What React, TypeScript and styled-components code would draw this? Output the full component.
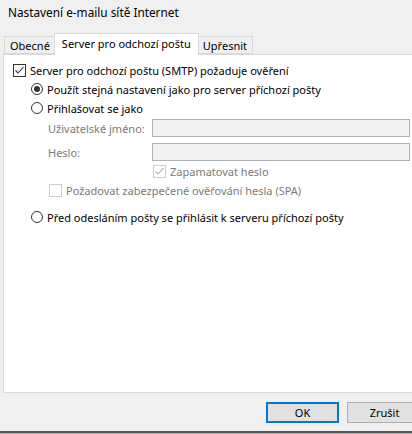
import React from "react";
import styled, { createGlobalStyle } from "styled-components";

const GlobalStyle = createGlobalStyle`
  html, body {
    margin: 0;
    padding: 0;
    background: #f0f0f0;
    overflow: hidden;
  }
  body {
    font-family: "Noto Sans", "Open Sans", sans-serif;
    font-size: 11px;
    color: #000;
  }
`;

const Dialog = styled.div`
  width: 412px;
  height: 434px;
  overflow: hidden;
  display: flex;
  flex-direction: column;
  background: #f0f0f0;
`;

const TitleBar = styled.div`
  height: 24px;
  padding-left: 8px;
  display: flex;
  align-items: center;
  font-size: 11.8px;
`;

const TabStrip = styled.div`
  display: flex;
  align-items: flex-end;
  height: 30px;
  padding-left: 4px;
  position: relative;
  z-index: 1;
`;

const Tab = styled.div<{ $active?: boolean }>`
  box-sizing: border-box;
  height: ${({ $active }) => ($active ? "22px" : "18px")};
  margin: ${({ $active }) => ($active ? "0 -2px -1px" : "0")};
  padding: ${({ $active }) => ($active ? "0 7px 2px" : "0 5px")};
  display: flex;
  align-items: center;
  border: 1px solid #d9d9d9;
  border-bottom: ${({ $active }) => ($active ? "none" : "1px solid #d9d9d9")};
  background: ${({ $active }) => ($active ? "#ffffff" : "#f0f0f0")};
  position: relative;
  z-index: ${({ $active }) => ($active ? 2 : 1)};
  white-space: nowrap;
`;

const Panel = styled.div`
  margin-left: 3px;
  width: 430px;
  flex-shrink: 0;
  height: 339px;
  box-sizing: border-box;
  background: #ffffff;
  border: 1px solid #d9d9d9;
  padding: 6px 0 0 9px;
  display: flex;
  flex-direction: column;
`;

const Row = styled.div<{ $indent?: number; $top?: number; $disabled?: boolean }>`
  height: 18px;
  display: flex;
  align-items: center;
  gap: 4px;
  margin-left: ${({ $indent }) => $indent ?? 0}px;
  margin-top: ${({ $top }) => $top ?? 0}px;
  color: ${({ $disabled }) => ($disabled ? "#7a7a7a" : "#000")};
  white-space: nowrap;
`;

const FieldLabel = styled.span`
  width: 100px;
  color: #7a7a7a;
`;

const Field = styled.div`
  width: 258px;
  height: 18px;
  flex-shrink: 0;
  box-sizing: border-box;
  background: #f0f0f0;
  border: 1px solid #abb2b9;
`;

const Box = styled.span<{ $disabled?: boolean }>`
  width: 13px;
  height: 13px;
  box-sizing: border-box;
  border: 1px solid ${({ $disabled }) => ($disabled ? "#cccccc" : "#333333")};
  background: #ffffff;
  display: flex;
  align-items: center;
  justify-content: center;
  flex-shrink: 0;
`;

const Ring = styled.span`
  width: 12px;
  height: 12px;
  box-sizing: border-box;
  border: 1px solid #333333;
  border-radius: 50%;
  background: #ffffff;
  display: flex;
  align-items: center;
  justify-content: center;
  flex-shrink: 0;
`;

const Dot = styled.span`
  width: 6px;
  height: 6px;
  border-radius: 50%;
  background: #333333;
`;

const Footer = styled.div`
  flex: 1;
  display: flex;
  flex-direction: column;
`;

const ButtonBar = styled.div`
  display: flex;
  gap: 8px;
  padding: 9px 0 0 266px;
  height: 29px;
`;

const Button = styled.div<{ $primary?: boolean }>`
  width: ${({ $primary }) => ($primary ? "73px" : "75px")};
  height: 21px;
  flex-shrink: 0;
  box-sizing: border-box;
  display: flex;
  align-items: center;
  justify-content: center;
  background: #e1e1e1;
  border: 1px solid ${({ $primary }) => ($primary ? "#0078d7" : "#adadad")};
  box-shadow: ${({ $primary }) => ($primary ? "inset 0 0 0 1px #0078d7" : "none")};
`;

const Edge = styled.div`
  flex: 1;
  border-top: 2px solid #555555;
  background: #b9b9b9;
`;

const Checkbox = ({ checked, disabled }: { checked?: boolean; disabled?: boolean }) => (
  <Box $disabled={disabled}>
    {checked && (
      <svg width="11" height="11" viewBox="0 0 11 11">
        <path
          d="M1.5 5.5 L4 8 L9.5 2"
          fill="none"
          stroke={disabled ? "#b0b0b0" : "#333333"}
          strokeWidth="1.1"
        />
      </svg>
    )}
  </Box>
);

const Radio = ({ checked }: { checked?: boolean }) => <Ring>{checked && <Dot />}</Ring>;

export default function App() {
  return (
    <>
      <GlobalStyle />
      <Dialog>
        <TitleBar>Nastavení e-mailu sítě Internet</TitleBar>
        <TabStrip>
          <Tab>Obecné</Tab>
          <Tab $active>Server pro odchozí poštu</Tab>
          <Tab>Upřesnit</Tab>
        </TabStrip>
        <Panel>
          <Row>
            <Checkbox checked />
            Server pro odchozí poštu (SMTP) požaduje ověření
          </Row>
          <Row $indent={18} $top={1}>
            <Radio checked />
            Použít stejná nastavení jako pro server příchozí pošty
          </Row>
          <Row $indent={18} $top={1}>
            <Radio />
            Přihlašovat se jako
          </Row>
          <Row $indent={35} $top={2}>
            <FieldLabel>Uživatelské jméno:</FieldLabel>
            <Field />
          </Row>
          <Row $indent={35} $top={6}>
            <FieldLabel>Heslo:</FieldLabel>
            <Field />
          </Row>
          <Row $indent={140} $top={1} $disabled>
            <Checkbox checked disabled />
            Zapamatovat heslo
          </Row>
          <Row $indent={36} $top={1} $disabled>
            <Checkbox disabled />
            Požadovat zabezpečené ověřování hesla (SPA)
          </Row>
          <Row $indent={18} $top={9}>
            <Radio />
            Před odesláním pošty se přihlásit k serveru příchozí pošty
          </Row>
        </Panel>
        <Footer>
          <ButtonBar>
            <Button $primary>OK</Button>
            <Button>Zrušit</Button>
          </ButtonBar>
          <Edge />
        </Footer>
      </Dialog>
    </>
  );
}
